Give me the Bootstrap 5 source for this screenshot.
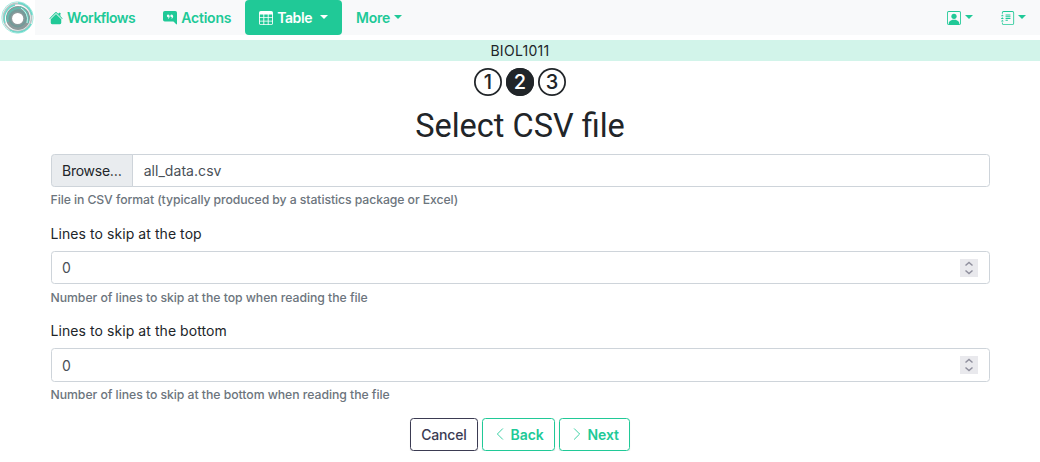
<!DOCTYPE html>
<html lang="en">
<head>
<meta charset="utf-8">
<meta name="viewport" content="width=device-width, initial-scale=1">
<title>Select CSV file</title>
<link href="https://cdn.jsdelivr.net/npm/bootstrap@5.3.0/dist/css/bootstrap.min.css" rel="stylesheet">
<style>
html{font-size:14px}
body{font-family:Inter,"Liberation Sans",sans-serif;font-size:14px;color:#212529;overflow:hidden}
.topbar{height:35px;background:#f8f9fa;--bs-navbar-padding-y:0}
.topbar svg,.btn svg{display:block;flex:none}
.brand-logo{width:35px;height:35px;background:#fff}
.topbar .nav-link{height:35px;padding:0 14px;color:#20c997;font-weight:600;letter-spacing:-.22px;display:flex;align-items:center;border-radius:4px}
.topbar .nav-link svg{margin-right:4px}
.topbar .nav-link.nav-wide{letter-spacing:-.5px}
.topbar .nav-link.nav-icon svg{margin-right:0}
.topbar .nav-link.active{background:#20c997;color:#fff;letter-spacing:-.42px}
.topbar .dropdown-toggle::after{margin-left:3.4px;margin-bottom:2px;vertical-align:0}
.topbar .nav-link.active.dropdown-toggle::after{margin-left:8px}
.course{margin-top:5px;height:21px;line-height:22px;background:#d2f4ea;letter-spacing:.3px}
.steps{gap:4px}
.step{width:28px;height:28px;box-shadow:inset 0 0 0 1.75px #212529;border-radius:50%;font-size:20px;font-weight:500;line-height:28px;text-align:center}
.step.current{background:#212529;color:#fff}
.page-title{font-family:Roboto,sans-serif;font-size:32.5px;line-height:38px;font-weight:400;margin:10.6px 0 9.3px}
.fields{width:939.5px;margin:0 auto 0 50.5px}
.form-control,.input-group-text{font-size:14px;border-color:#ced4da;border-radius:3.5px;color:#495057;height:33.2px}
.input-group-text{background:#e9ecef;color:#212529;letter-spacing:-.26px;line-height:20px;padding-top:7px}
.file-name{letter-spacing:.05px}
.form-label{margin-bottom:7px;letter-spacing:.07px}
.form-text{font-size:12.25px;font-weight:500;color:#6c757d;margin-top:4.2px;line-height:17.9px;letter-spacing:-.05px}
.help-file{letter-spacing:-.085px}
.spin{position:absolute;right:12px;top:8px;width:18px;height:18px;background:#e9e9ed}
.actions{gap:4px}
.actions .btn{font-size:14px;height:33px;border-radius:3.5px;padding:0 10.2px;display:flex;align-items:center;box-shadow:0 1px 1px rgba(0,0,0,.15)}
.actions .btn-cancel{--bs-btn-color:#3b3b52;--bs-btn-border-color:#3b3b52;font-weight:500;letter-spacing:-.15px}
.btn-step{--bs-btn-color:#20c997;--bs-btn-border-color:#20c997;font-weight:600;letter-spacing:-.1px}
</style>
</head>
<body>
<nav class="navbar topbar flex-nowrap justify-content-start">
  <a class="brand-logo" href="#" aria-label="Home">
    <svg width="35" height="35" viewBox="0 0 35 35" fill="none">
      <circle cx="17.5" cy="17.5" r="15.8" stroke="#a9eee3" stroke-width="1"/>
      <circle cx="17.5" cy="17.5" r="14" stroke="#b9c5c5" stroke-width="1.8"/>
      <circle cx="18" cy="18" r="12" fill="#8c9a9b"/>
      <path d="M5 23A14 14 0 0 1 15 5M10 30A15 15 0 0 0 31 24M18 3A15 15 0 0 1 32 15" stroke="#69d9ca" stroke-width="1.4"/>
      <path d="M8 22A11 11 0 0 1 23 9M20 7Q29 11 28 23" stroke="#64b9ad" stroke-width="2"/>
      <path d="M21 8Q29 13 27 23" stroke="#c0fff4" stroke-width="1"/>
      <circle cx="17.7" cy="18.5" r="8" stroke="#729b99" stroke-width="2"/>
      <circle cx="17.7" cy="18.5" r="5.6" fill="#fff"/>
    </svg>
  </a>
  <a class="nav-link nav-wide" href="#"><svg width="14" height="14" viewBox="0 0 16 16" fill="currentColor"><path d="M8 3.3l6 6v4.2a1.5 1.5 0 0 1-1.5 1.5h-9A1.5 1.5 0 0 1 2 13.5V9.3l6-6z"/><path d="M13 2.5V6l-2-2V2.500a.5.5 0 0 1 .5-.5h1a.5.5 0 0 1 .5.5z"/><path d="M7.293 1.500a1 1 0 0 1 1.414 0l6.647 6.646a.5.5 0 0 1-.708.708L8 2.207 1.354 8.854a.5.5 0 1 1-.708-.708L7.293 1.500z"/></svg>Workflows</a>
  <a class="nav-link" href="#"><svg width="14" height="14" viewBox="0 0 16 16" fill="currentColor"><path d="M16 2a2 2 0 0 0-2-2H2a2 2 0 0 0-2 2v8a2 2 0 0 0 2 2h9.586a1 1 0 0 1 .707.293l2.853 2.853a.5.5 0 0 0 .854-.353V2z"/><path d="M7.200 4.770c-.3-.5-.8-.77-1.400-.77a1.500 1.500 0 1 0 .8 2.830c-.13.39-.38.8-.79 1.190a.45.45 0 0 0 .61.650C7.700 7.500 8 5.900 7.200 4.770zM11.200 4.770c-.3-.5-.8-.77-1.400-.77a1.500 1.500 0 1 0 .8 2.830c-.13.39-.38.8-.79 1.190a.45.45 0 0 0 .61.650C11.700 7.500 12 5.900 11.200 4.770z" fill="#f8f9fa"/></svg>Actions</a>
  <a class="nav-link active dropdown-toggle" href="#"><svg width="14" height="14" viewBox="0 0 16 16" fill="currentColor"><path d="M0 2a2 2 0 0 1 2-2h12a2 2 0 0 1 2 2v12a2 2 0 0 1-2 2H2a2 2 0 0 1-2-2V2zm15 2h-4v3h4V4zm0 4h-4v3h4V8zm0 4h-4v3h3a1 1 0 0 0 1-1v-2zm-5 3v-3H6v3h4zm-5 0v-3H1v2a1 1 0 0 0 1 1h3zm-4-4h4V8H1v3zm0-4h4V4H1v3zm5-3v3h4V4H6zm4 4H6v3h4V8z"/></svg>Table</a>
  <a class="nav-link dropdown-toggle" href="#">More</a>
  <a class="nav-link nav-icon dropdown-toggle ms-auto" href="#" aria-label="Profile"><svg width="14" height="14" viewBox="0 0 16 16" fill="currentColor"><path d="M11 6a3 3 0 1 1-6 0 3 3 0 0 1 6 0z"/><path d="M2 0a2 2 0 0 0-2 2v12a2 2 0 0 0 2 2h12a2 2 0 0 0 2-2V2a2 2 0 0 0-2-2H2zm12 1a1 1 0 0 1 1 1v12a1 1 0 0 1-1 1v-1c0-1-1-4-6-4s-6 3-6 4v1a1 1 0 0 1-1-1V2a1 1 0 0 1 1-1h12z"/></svg></a>
  <a class="nav-link nav-icon dropdown-toggle" href="#" aria-label="Journal"><svg width="14" height="14" viewBox="0 0 16 16" fill="currentColor"><path d="M5 10.500a.5.5 0 0 1 .5-.5h2a.5.5 0 0 1 0 1h-2a.5.5 0 0 1-.5-.5zm0-2a.5.5 0 0 1 .5-.5h5a.5.5 0 0 1 0 1h-5a.5.5 0 0 1-.5-.5zm0-2a.5.5 0 0 1 .5-.5h5a.5.5 0 0 1 0 1h-5a.5.5 0 0 1-.5-.5zm0-2a.5.5 0 0 1 .5-.5h5a.5.5 0 0 1 0 1h-5a.5.5 0 0 1-.5-.5z"/><path d="M3 0h10a2 2 0 0 1 2 2v12a2 2 0 0 1-2 2H3a2 2 0 0 1-2-2v-1h1v1a1 1 0 0 0 1 1h10a1 1 0 0 0 1-1V2a1 1 0 0 0-1-1H3a1 1 0 0 0-1 1v1H1V2a2 2 0 0 1 2-2z"/><path d="M1 5v-.5a.5.5 0 0 1 1 0V5h.5a.5.5 0 0 1 0 1h-2a.5.5 0 0 1 0-1H1zm0 3v-.5a.5.5 0 0 1 1 0V8h.5a.5.5 0 0 1 0 1h-2a.5.5 0 0 1 0-1H1zm0 3v-.5a.5.5 0 0 1 1 0v.5h.5a.5.5 0 0 1 0 1h-2a.5.5 0 0 1 0-1H1z"/></svg></a>
</nav>
<div class="course text-center">BIOL1011</div>
<main>
  <div class="steps d-flex justify-content-center pt-2">
    <div class="step">1</div><div class="step current">2</div><div class="step">3</div>
  </div>
  <h1 class="page-title text-center">Select CSV file</h1>
  <form class="fields">
    <div class="mb-3">
      <div class="input-group"><span class="input-group-text">Browse…</span><div class="form-control file-name">all_data.csv</div></div>
      <div class="form-text help-file">File in CSV format (typically produced by a statistics package or Excel)</div>
    </div>
    <div class="mb-3">
      <label class="form-label d-block" for="top">Lines to skip at the top</label>
      <div class="position-relative"><input class="form-control" id="top" value="0"><span class="spin"><svg class="d-block" width="18" height="18" viewBox="0 0 18 18" fill="none" stroke="#8f8f9d" stroke-width="1.5"><path d="M5.500 6.500L9 3.500l3.500 3M5.500 11.500l3.500 3 3.500-3"/></svg></span></div>
      <div class="form-text">Number of lines to skip at the top when reading the file</div>
    </div>
    <div class="mb-3">
      <label class="form-label d-block" for="bottom">Lines to skip at the bottom</label>
      <div class="position-relative"><input class="form-control" id="bottom" value="0"><span class="spin"><svg class="d-block" width="18" height="18" viewBox="0 0 18 18" fill="none" stroke="#8f8f9d" stroke-width="1.5"><path d="M5.500 6.500L9 3.500l3.500 3M5.500 11.500l3.500 3 3.500-3"/></svg></span></div>
      <div class="form-text">Number of lines to skip at the bottom when reading the file</div>
    </div>
  </form>
  <div class="actions d-flex justify-content-center">
    <button class="btn btn-cancel" type="button">Cancel</button>
    <button class="btn btn-step" type="button"><svg class="me-1" width="14" height="14" viewBox="0 0 16 16" fill="none" stroke="currentColor" stroke-linecap="round" stroke-linejoin="round"><path d="M11 2L5 8l6 6"/></svg>Back</button>
    <button class="btn btn-step" type="button"><svg class="me-1" width="14" height="14" viewBox="0 0 16 16" fill="none" stroke="currentColor" stroke-linecap="round" stroke-linejoin="round"><path d="M5 2l6 6-6 6"/></svg>Next</button>
  </div>
</main>
<script src="https://cdn.jsdelivr.net/npm/bootstrap@5.3.0/dist/js/bootstrap.bundle.min.js"></script>
</body>
</html>
